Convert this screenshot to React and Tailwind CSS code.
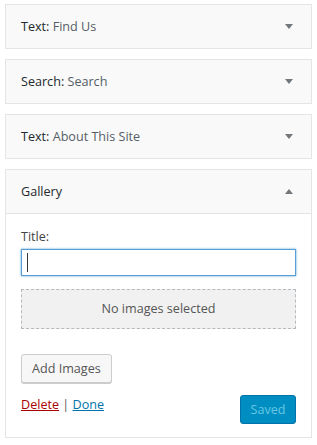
import React from "react";

function Arrow({ up }) {
  return (
    <svg width="8" height="5" viewBox="0 0 8 5" className="mr-[3px]">
      {up ? (
        <polygon points="0,5 8,5 4,0" fill="#72777c" />
      ) : (
        <polygon points="0,0 8,0 4,5" fill="#72777c" />
      )}
    </svg>
  );
}

function ClosedWidget({ kind, name }) {
  return (
    <div className="h-[45px] border border-[#e5e5e5] bg-[#f9f9f9] flex items-center justify-between pl-[15px] pr-[15px] mb-[10px]">
      <div className="text-[#23282d]">
        {kind}: <span className="text-[#555d66]">{name}</span>
      </div>
      <Arrow />
    </div>
  );
}

export default function App() {
  return (
    <div
      className="w-[317px] h-[445px] bg-white pt-[4px] px-[5px] text-[12.6px] leading-[18px]"
      style={{ fontFamily: "'Open Sans', 'Noto Sans', sans-serif" }}
    >
      <ClosedWidget kind="Text" name="Find Us" />
      <ClosedWidget kind="Search" name="Search" />
      <ClosedWidget kind="Text" name="About This Site" />
      <div className="border border-[#e5e5e5] bg-white">
        <div className="h-[44px] bg-[#f9f9f9] border-b border-[#e5e5e5] flex items-center justify-between px-[15px]">
          <div className="text-[#23282d]">Gallery</div>
          <Arrow up />
        </div>
        <div className="px-[15px] pt-[14px] pb-[13px]">
          <div className="text-[#444]">Title:</div>
          <div className="mt-[3px] h-[27px] border border-[#5b9dd9] shadow-[0_0_2px_rgba(30,140,190,0.8)] bg-white flex items-center pl-[5px]">
            <div className="w-px h-[19px] bg-[#32373c]" />
          </div>
          <div className="mt-[13px] h-[40px] border border-dashed border-[#b4b9be] bg-[#f1f1f1] flex items-center justify-center text-[#555]">
            No images selected
          </div>
          <div className="mt-[25px]">
            <div className="inline-flex items-center h-[29px] px-[10px] border border-[#cccccc] rounded-[3px] bg-[#f7f7f7] shadow-[0_1px_0_#cccccc] text-[#555]">
              Add Images
            </div>
          </div>
          <div className="mt-[12px] flex items-start justify-between">
            <div className="mt-[1px]">
              <span className="text-[#a00] underline">Delete</span>
              <span className="text-[#555]"> | </span>
              <span className="text-[#0073aa] underline">Done</span>
            </div>
            <div className="h-[29px] w-[56px] flex items-center justify-center rounded-[3px] bg-[#008ec2] border border-[#0073aa] text-[#66c6e4]">
              Saved
            </div>
          </div>
        </div>
      </div>
    </div>
  );
}
